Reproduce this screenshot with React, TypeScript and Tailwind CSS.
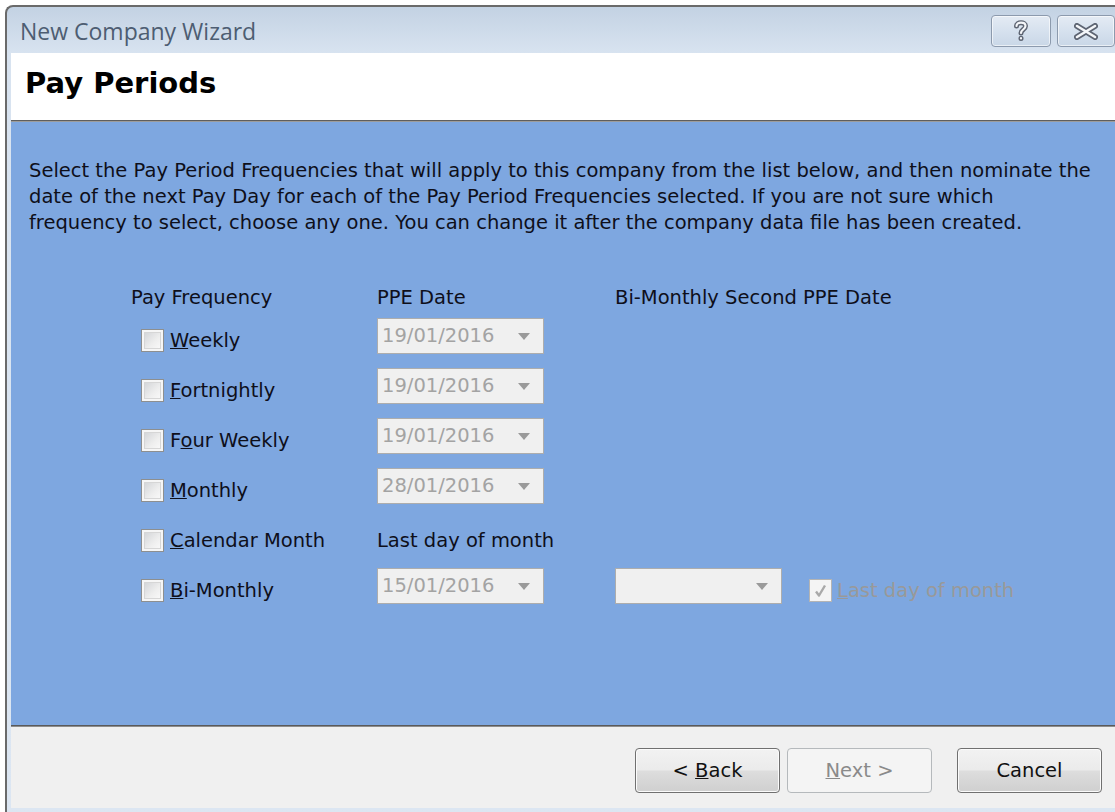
import type { ReactNode } from 'react';

type Row = {
  key: string;
  label: ReactNode;
  date?: string;
  note?: string;
  second?: boolean;
};

const rows: Row[] = [
  { key: 'weekly', label: <><u>W</u>eekly</>, date: '19/01/2016' },
  { key: 'fortnightly', label: <><u>F</u>ortnightly</>, date: '19/01/2016' },
  { key: 'four', label: <>F<u>o</u>ur Weekly</>, date: '19/01/2016' },
  { key: 'monthly', label: <><u>M</u>onthly</>, date: '28/01/2016' },
  { key: 'calendar', label: <><u>C</u>alendar Month</>, note: 'Last day of month' },
  { key: 'bimonthly', label: <><u>B</u>i-Monthly</>, date: '15/01/2016', second: true },
];

function CheckBox({ checked = false, disabled = false }: { checked?: boolean; disabled?: boolean }) {
  return (
    <div
      className={`flex h-[23px] w-[23px] shrink-0 items-center justify-center border ${
        disabled ? 'border-[#b4b4b4] bg-[#f4f4f4]' : 'border-[#8e8f8f] bg-[#f6f6f6]'
      }`}
    >
      {checked ? (
        <svg width="15" height="15" viewBox="0 0 15 15">
          <path d="M3 8.5 L6 12.5 L12 2.5" fill="none" stroke="#a9a9a9" strokeWidth="2.4" strokeLinejoin="round" />
        </svg>
      ) : (
        <div className="h-[17px] w-[17px] border border-[#d6d6d6] bg-[linear-gradient(135deg,#d4d6d9_0%,#eeeeee_60%,#f8f8f8_100%)]" />
      )}
    </div>
  );
}

function DateCombo({ value = '', className = '' }: { value?: string; className?: string }) {
  return (
    <div
      className={`flex h-[36px] items-center justify-between border border-[#adadad] bg-[#f0f0f0] pl-[4px] pr-[13px] text-[#a3a3a3] ${className}`}
    >
      <span>{value}</span>
      <svg width="12" height="7" viewBox="0 0 12 7">
        <path d="M0 0 H12 L6 7 Z" fill="#9a9a9a" />
      </svg>
    </div>
  );
}

function CaptionButton({ children, className = '' }: { children: ReactNode; className?: string }) {
  return (
    <div
      className={`flex h-[32px] items-center justify-center rounded-[4px] border border-[#8c9aad] bg-[linear-gradient(to_bottom,#e4ebf4_0%,#d6e1ee_50%,#c9d7e7_100%)] shadow-[inset_0_0_0_1px_rgba(255,255,255,0.6)] ${className}`}
    >
      {children}
    </div>
  );
}

function WizardButton({ children, disabled = false, className = '' }: { children: ReactNode; disabled?: boolean; className?: string }) {
  return (
    <button
      type="button"
      className={`h-[45px] w-[145px] rounded-[4px] border text-center ${
        disabled
          ? 'border-[#b5b9bc] bg-[#f4f4f4] text-[#8a8a8a]'
          : 'border-[#707070] bg-[linear-gradient(to_bottom,#f2f2f2_0%,#ebebeb_48%,#dddddd_52%,#cfcfcf_100%)] text-[#111111] shadow-[inset_0_0_0_1px_#fbfbfb]'
      } ${className}`}
    >
      {children}
    </button>
  );
}

export default function App() {
  return (
    <div className="h-[812px] w-[1115px] overflow-hidden bg-white font-['DejaVu_Sans',sans-serif] text-[19.5px] text-[#0e0f1a]">
      <div className="ml-[5px] mt-[5px] flex h-[820px] w-[1125px] flex-col rounded-tl-[8px] border-l-2 border-t-2 border-[#6a6a6a] bg-[linear-gradient(to_bottom,#c3d2e3_0px,#d8e3f0_46px,#dce6f2_100%)]">
        {/* caption */}
        <div className="flex h-[46px] shrink-0 items-start">
          <span className="ml-[13px] mt-[9px] font-['Open_Sans',sans-serif] text-[23px] leading-[30px] text-[#4d5d72]">
            New Company Wizard
          </span>
          <div className="ml-auto mr-[15px] mt-[8px] flex gap-[6px]">
            <CaptionButton className="w-[60px]">
              <svg width="16" height="22" viewBox="0 0 16 22">
                <g fill="none" strokeLinecap="round">
                  <path d="M3.5 6 C3.5 1.5 12.5 1.5 12.5 6 C12.5 9.5 8 9.5 8 13" stroke="#5d6472" strokeWidth="5" />
                  <path d="M3.5 6 C3.5 1.5 12.5 1.5 12.5 6 C12.5 9.5 8 9.5 8 13" stroke="#f4f6f9" strokeWidth="2.2" />
                  <path d="M8 18.2 L8 18.4" stroke="#5d6472" strokeWidth="5" />
                  <path d="M8 18.2 L8 18.4" stroke="#f4f6f9" strokeWidth="2.2" />
                </g>
              </svg>
            </CaptionButton>
            <CaptionButton className="w-[58px]">
              <svg width="24" height="17" viewBox="0 0 24 17">
                <g fill="none" strokeLinecap="round">
                  <path d="M3 3 L21 14 M21 3 L3 14" stroke="#5d6472" strokeWidth="6" />
                  <path d="M3 3 L21 14 M21 3 L3 14" stroke="#f4f6f9" strokeWidth="2.6" />
                </g>
              </svg>
            </CaptionButton>
          </div>
        </div>

        {/* client area */}
        <div className="flex flex-1 flex-col pl-[4px]">
          <div className="flex h-[67px] shrink-0 items-center bg-white pb-[6px] pl-[14px]">
            <h1 className="text-[29px] font-bold leading-none text-black">Pay Periods</h1>
          </div>
          <div className="h-[1px] bg-[#5e5e5e]" />
          <div className="h-[1px] bg-[#9c9c9c]" />

          <div className="h-[603px] shrink-0 bg-[#7ea7e0] pl-[18px] pt-[36px]">
            <p className="whitespace-nowrap leading-[26px]">
              Select the Pay Period Frequencies that will apply to this company from the list below, and then nominate the
              <br />
              date of the next Pay Day for each of the Pay Period Frequencies selected. If you are not sure which
              <br />
              frequency to select, choose any one. You can change it after the company data file has been created.
            </p>

            <div className="ml-[102px] mt-[49px]">
              <div className="grid h-[26px] grid-cols-[246px_238px_1fr] leading-[26px]">
                <span>Pay Frequency</span>
                <span>PPE Date</span>
                <span>Bi-Monthly Second PPE Date</span>
              </div>

              <div className="mt-[7px]">
                {rows.map((row) => (
                  <div key={row.key} className="grid h-[50px] grid-cols-[246px_238px_1fr] items-start">
                    <div className="mt-[5px] flex h-[35px] items-center gap-[6px] pl-[10px]">
                      <CheckBox />
                      <span>{row.label}</span>
                    </div>
                    <div>
                      {row.date ? (
                        <DateCombo value={row.date} className="w-[167px]" />
                      ) : (
                        <div className="mt-[5px] flex h-[35px] items-center">{row.note}</div>
                      )}
                    </div>
                    {row.second ? (
                      <div className="flex items-start">
                        <DateCombo className="w-[167px]" />
                        <div className="ml-[27px] mt-[5px] flex h-[35px] items-center gap-[5px] text-[#999999]">
                          <CheckBox checked disabled />
                          <span>
                            <u>L</u>ast day of month
                          </span>
                        </div>
                      </div>
                    ) : (
                      <div />
                    )}
                  </div>
                ))}
              </div>
            </div>
          </div>

          <div className="h-[1px] bg-[#5a5a5a]" />
          <div className="h-[1px] bg-[#8d8d8d]" />

          <div className="flex h-[81px] shrink-0 items-start bg-[#f0f0f0] pl-[624px] pt-[21px]">
            <WizardButton>
              &lt; <u>B</u>ack
            </WizardButton>
            <WizardButton disabled className="ml-[7px]">
              <u>N</u>ext &gt;
            </WizardButton>
            <WizardButton className="ml-[25px]">Cancel</WizardButton>
          </div>
        </div>
      </div>
    </div>
  );
}
